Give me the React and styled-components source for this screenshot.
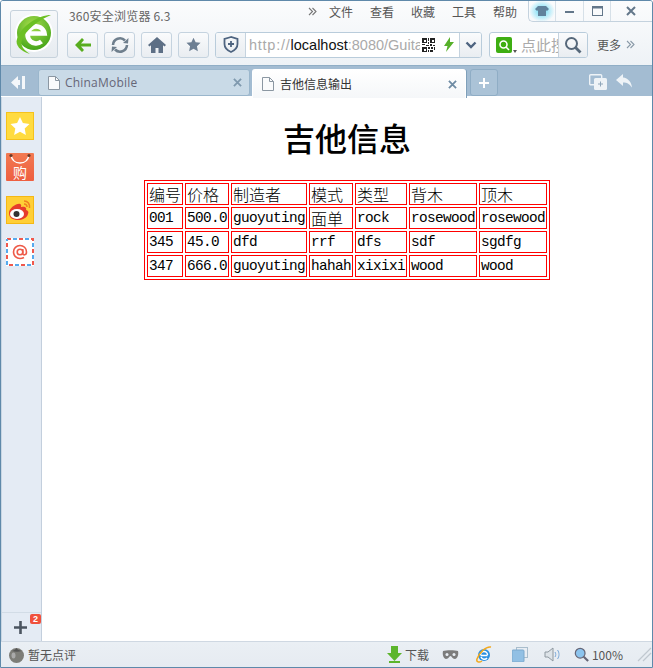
import React from "react";
import styled, { createGlobalStyle } from "styled-components";

const Global = createGlobalStyle`
  html, body { margin: 0; padding: 0; background: #fff; }
  * { box-sizing: border-box; }
`;
const UI = `"Noto Sans CJK SC", "Liberation Sans", sans-serif`;

const Win = styled.div`
  width: 653px; height: 668px; display: flex; flex-direction: column;
  border: 1px solid #5f89aa; border-radius: 3px 3px 0 0;
  font-family: ${UI}; overflow: hidden; background: #fff;
`;
const Toolbar = styled.div`
  height: 64px; flex: none; display: flex;
  padding: 0 0 0 9px;
  background: linear-gradient(#fbfcfd, #eef2f6);
`;
const LogoBox = styled.div`
  width: 48px; height: 48px; margin-top: 9px; flex: none;
  border: 1px solid #c6d2dc; border-radius: 3px;
  background: linear-gradient(#f6f8fa, #e6ebf0);
  display: flex; align-items: center; justify-content: center;
`;
const ToolCol = styled.div`
  flex: 1; min-width: 0; margin-left: 9px; display: flex; flex-direction: column;
`;
const TopRow = styled.div`
  height: 30px; display: flex; align-items: flex-start;
`;
const Title = styled.div`
  font-size: 12px; letter-spacing: 0.2px; color: #666; margin: 7px 0 0 2px; width: 239px; flex: none; line-height: 15px; white-space: nowrap;
`;
const Menu = styled.div`
  display: flex; align-items: center; height: 21px; font-size: 12px; color: #555; flex: 1; min-width: 0;
`;
const MenuItem = styled.span`
  width: 41px; line-height: 21px; flex: none;
`;
const Chev = styled.span`
  width: 21px; height: 21px; display: flex; align-items: center; flex: none;
`;
const WinBtns = styled.div`
  display: flex; height: 21px; flex: 1; border-left: 1px solid #c4d2de; border-bottom: 1px solid #c4d2de; border-radius: 0 0 0 5px; margin-left: -6px;
`;
const WinBtn = styled.div`
  width: ${p => p.$w}px; flex: none; display: flex; align-items: center; justify-content: center;
  border-right: ${p => p.$last ? "none" : "1px solid #d6e0e8"};
`;
const NavRow = styled.div`
  height: 27px; display: flex; align-items: center;
`;
const NavBtn = styled.div`
  width: 31px; height: 26px; flex: none; margin-right: 6px; border: 1px solid #c5d3df; border-radius: 3px;
  background: linear-gradient(#fafbfc, #e9edf1); display: flex; align-items: center; justify-content: center;
`;
const AddrBar = styled.div`
  width: 267px; height: 26px; flex: none; display: flex; border: 1px solid #b9ccdb; border-radius: 3px; overflow: hidden; background: #fff;
`;
const AddrShield = styled.div`
  width: 30px; flex: none; border-right: 1px solid #c5d3df; background: linear-gradient(#f6f8fa, #e9edf1);
  display: flex; align-items: center; justify-content: center;
`;
const AddrText = styled.div`
  width: 174px; flex: none; overflow: hidden; white-space: nowrap; font-family: "Liberation Sans", sans-serif;
  font-size: 14.5px; line-height: 24px; padding-left: 3px; color: #aaa;
`;
const AddrScheme = styled.span` letter-spacing: 0.75px; `;
const AddrHost = styled.span` color: #111; `;
const AddrIcons = styled.div`
  flex: 1; display: flex; align-items: center; gap: 9px; padding-left: 2px;
`;
const AddrDrop = styled.div`
  width: 22px; flex: none; border-left: 1px solid #c5d3df; background: linear-gradient(#fafbfc, #e9edf1);
  display: flex; align-items: center; justify-content: center;
`;
const SearchBar = styled.div`
  width: 99px; height: 26px; flex: none; margin-left: 7px; display: flex; border: 1px solid #b9ccdb; border-radius: 3px; overflow: hidden; background: #fff;
`;
const Engine = styled.div`
  width: 24px; flex: none; display: flex; align-items: center; padding-left: 6px; position: relative;
`;
const EngineCaret = styled.div`
  position: absolute; left: 23px; top: 17px; width: 0; height: 0; border: 2.5px solid transparent; border-top: 3px solid #555;
`;
const SearchText = styled.div`
  width: 37px; flex: none; margin-left: 7px; overflow: hidden; white-space: nowrap; font-size: 15px; line-height: 24px; color: #aaa;
`;
const SearchBtn = styled.div`
  flex: 1; border-left: 1px solid #c5d3df; background: linear-gradient(#fafbfc, #e9edf1);
  display: flex; align-items: center; justify-content: center;
`;
const More = styled.div`
  margin-left: 9px; font-size: 12px; color: #555; white-space: nowrap; display: flex; gap: 5px; align-items: center;
`;

const TabBar = styled.div`
  height: 31px; flex: none; display: flex; align-items: flex-start; background: #a3bcd2;
  border-top: 1px solid #90aec6; padding: 3px 0 0 9px; position: relative;
`;
const SideToggle = styled.div`
  width: 20px; height: 26px; margin-right: 8px; display: flex; align-items: center; flex: none;
`;
const Tab = styled.div`
  width: ${p => p.$active ? 214 : 212}px; height: ${p => p.$active ? 29 : 27}px; flex: none; margin-right: 2px; display: flex; align-items: center;
  padding: 0 ${p => p.$active ? 8 : 7}px 0 9px; font-size: 12px; color: ${p => p.$active ? "#333" : "#667"};
  background: ${p => p.$active ? "linear-gradient(#fff, #f5f7f9)" : "#c9dae7"};
  border: 1px solid ${p => p.$active ? "#fff" : "#9ab6cc"}; border-bottom: ${p => p.$active ? "none" : undefined};
  border-radius: 3px 3px ${p => p.$active ? "0 0" : "3px 3px"};
  ${p => p.$active ? "box-shadow: 1px 0 0 #7fa0ba;" : ""}
  z-index: ${p => p.$active ? 1 : 0};
`;
const TabLabel = styled.span`
  flex: 1; margin-left: ${p => p.$latin ? 5 : 6}px; line-height: 24px; white-space: nowrap;
  font-family: ${p => p.$latin ? `"Open Sans", "Liberation Sans", sans-serif` : UI}; letter-spacing: ${p => p.$latin ? "0.2px" : 0};
`;
const NewTab = styled.div`
  width: 28px; height: 27px; flex: none; margin-left: 2px; border: 1px solid #8fadc5; border-radius: 3px; background: #abc3d7;
  display: flex; align-items: center; justify-content: center;
`;
const TabRight = styled.div`
  margin-left: auto; display: flex; gap: 9px; padding: 5px 19px 0 0;
`;
const Body = styled.div`
  flex: 1; min-height: 0; display: flex;
`;
const Sidebar = styled.div`
  width: 41px; flex: none; background: #e4ebf4; border-left: 1px solid #c8d6e3; border-right: 1px solid #c3cfdd;
  display: flex; flex-direction: column; align-items: center; padding-top: 15px; margin-top: 1px;
`;
const SideIcon = styled.div`
  width: 28px; height: 28px; margin-bottom: ${p => p.$mb}px; flex: none; margin-right: 3px;
`;
const SideAdd = styled.div`
  margin-top: auto; width: 100%; height: 29px; border-top: 1px solid #d2dce6; position: relative;
  display: flex; align-items: center; justify-content: center; padding-right: 3px;
`;
const Badge = styled.div`
  position: absolute; right: 0; top: 1px; width: 11px; height: 10px; border-radius: 2px; background: #f0503c; color: #fff;
  font: bold 9px/10px "Liberation Sans", sans-serif; text-align: center;
`;
const Page = styled.main`
  flex: 1; min-width: 0; background: #fff; color: #000;
`;
const Heading = styled.h1`
  margin: 21px 0 0; text-align: center; font-size: 32px; line-height: 40px; font-weight: 500;
  font-family: "Noto Sans CJK SC", serif;
`;
const Table = styled.table`
  margin: 23px auto 0; border: 1px solid #f00; border-spacing: 2px; border-collapse: separate; table-layout: fixed; width: 406px;
`;
const Cell = styled.td`
  ${p => p.$w ? `width: ${p.$w}px;` : ""}
  border: 1px solid #f00; padding: 0 1px; height: 22px; overflow: hidden; white-space: nowrap;
  font-family: ${p => p.$cjk ? `"Noto Sans CJK SC", sans-serif` : `"Liberation Mono", monospace`};
  font-size: ${p => p.$cjk ? "16px" : "14.4px"};
  letter-spacing: ${p => p.$cjk ? 0 : "-0.64px"};
  line-height: 20px; color: #000; font-weight: ${p => p.$cjk ? 300 : 400};
`;
const Status = styled.div`
  height: 26px; flex: none; background: linear-gradient(#eaeff4, #e6ebf1); border-top: 1px solid #cfd8e2; display: flex; align-items: center;
  padding: 0 0 0 7px; font-size: 12px; color: #555; position: relative;
`;
const StatusText = styled.span` margin-left: 3px; white-space: nowrap; `;
const StatusRight = styled.div`
  margin-left: auto; display: flex; align-items: center;
`;
const StatusItem = styled.div`
  display: flex; align-items: center; gap: 3px; margin-right: ${p => p.$mr}px; white-space: nowrap;
`;

const Logo = () => (
  <svg width="46" height="46" viewBox="0 0 46 46" fill="none">
    <defs><radialGradient id="lg" cx="45%" cy="30%" r="75%"><stop offset="0" stopColor="#a9de4e" /><stop offset="1" stopColor="#3fa216" /></radialGradient></defs>
    <circle cx="23" cy="22" r="19" fill="#fff" />
    <circle cx="23" cy="22" r="17" fill="url(#lg)" />
    <path d="M18 22.500h15.500a8.500 8.500 0 1 0-3 8" stroke="#fff" strokeWidth="4.600" />
    <path d="M40 4C28 4 11 14 6 28c-2 6 3 12 13 15-6-4-10-8-8-14C14 20 27 9 40 4z" fill="#6cc024" />
  </svg>
);
const Back = () => <svg width="18" height="16" viewBox="0 0 18 16"><path d="M8 1 1 8l7 7 2-2-3-3.500h10v-3H7L10 3z" fill="#58ad1e" /></svg>;
const Refresh = () => (
  <svg width="20" height="18" viewBox="0 0 20 18" fill="none" stroke="#6f7f8d" strokeWidth="2.600">
    <path d="M3 9a7 7 0 0 1 12-4.500" /><path d="M17 9a7 7 0 0 1-12 4.500" />
    <path d="m18.500 2-.5 5.500-5-.5z" fill="#6f7f8d" stroke="none" /><path d="m1.500 16 .5-5.500 5 .5z" fill="#6f7f8d" stroke="none" />
  </svg>
);
const Home = () => <svg width="18" height="16" viewBox="0 0 18 16"><path d="M9 0 0 8l1.500 1.500L3 8.200V16h4.500v-5h3v5H15V8.200l1.500 1.300L18 8z" fill="#5d6f85" /></svg>;
const Star = () => <svg width="15" height="15" viewBox="0 0 24 24"><path d="m12 1 3.400 7.300 7.900 1-5.800 5.400 1.500 7.900-7-3.900-7 3.900 1.500-7.900L.7 9.300l7.900-1z" fill="#6d7f93" /></svg>;
const Shield = () => (
  <svg width="16" height="17" viewBox="0 0 16 17" fill="none">
    <path d="M8 1 1.500 3v5c0 4 3 6.500 6.500 8 3.500-1.500 6.500-4 6.500-8V3z" stroke="#4e6480" strokeWidth="1.800" />
    <path d="M8 5v6M5 8h6" stroke="#4e6480" strokeWidth="1.800" />
  </svg>
);
const QR = () => (
  <svg width="13" height="14" viewBox="0 0 13 14" shapeRendering="crispEdges">
    <path d="M0 0h5v5H0zM8 0h5v5H8zM0 9h5v5H0z" fill="#222" /><path d="M1.500 1.500h2v2h-2zM9.500 1.500h2v2h-2zM1.500 10.500h2v2h-2z" fill="#fff" />
    <path d="M6 0h1v3H6zM6 4h1v2H6zM0 6h3v1H0zM4 7h3v1H4zM8 6h2v2H8zM11 7h2v1h-2zM6 9h2v2H6zM9 9h2v2H9zM12 9h1v3h-1zM6 12h1v2H6zM8 12h3v2H8z" fill="#222" />
  </svg>
);
const Bolt = () => <svg width="10" height="15" viewBox="0 0 10 15"><path d="M6 0 0 9h3.500L2 15l8-10H6z" fill="#56b02a" /></svg>;
const Caret = () => <svg width="12" height="8" viewBox="0 0 12 8" fill="none"><path d="m1.500 1.500 4.500 4.500 4.500-4.500" stroke="#4e6480" strokeWidth="2.400" /></svg>;
const Mag = () => <svg width="18" height="18" viewBox="0 0 18 18" fill="none" stroke="#56687a"><circle cx="7.500" cy="7.500" r="5.500" strokeWidth="2" /><path d="m11.500 11.500 5 5" strokeWidth="2.800" /></svg>;
const EngineIcon = () => (
  <svg width="16" height="16" viewBox="0 0 16 16"><rect width="16" height="16" rx="2" fill="#3eae12" /><circle cx="7.500" cy="7.500" r="3.500" fill="none" stroke="#fff" strokeWidth="1.600" /><path d="m10 10 3 3" stroke="#fff" strokeWidth="1.600" /></svg>
);
const DoubleChev = ({ c }) => (
  <svg width="9" height="9" viewBox="0 0 9 9" fill="none" stroke={c} strokeWidth="1.100"><path d="m1 1 3.500 3.500L1 8M4.500 1 8 4.500 4.500 8" /></svg>
);
const Shirt = () => (
  <svg width="26" height="20" viewBox="0 0 26 20">
    <defs><radialGradient id="gl"><stop offset="0.3" stopColor="#8fe3f7" /><stop offset="1" stopColor="#8fe3f7" stopOpacity="0" /></radialGradient></defs>
    <ellipse cx="13" cy="10" rx="13" ry="11" fill="url(#gl)" />
    <path d="M9 5h8l3 3-2 2-1-.8V15H9V9.200L8 10 6 8z" fill="#60829c" />
  </svg>
);
const Min = () => <svg width="10" height="3"><rect width="9" height="2" y="1" fill="#63778a" /></svg>;
const Max = () => <svg width="11" height="10"><rect x=".5" y=".5" width="10" height="9" fill="none" stroke="#63778a" /><rect x="0" y="0" width="11" height="2.500" fill="#63778a" /></svg>;
const Close = ({ s = 10, c = "#63778a", w = 2 }) => <svg width={s} height={s} viewBox="0 0 10 10"><path d="m1 1 8 8M9 1l-8 8" stroke={c} strokeWidth={w} /></svg>;
const Doc = () => (
  <svg width="12" height="14" viewBox="0 0 12 14" fill="#fafbfc" stroke="#8b97a2"><path d="M.5.500h7l4 4v9H.5z" /><path d="M7.500.500v4h4" fill="none" /></svg>
);
const Plus = ({ s = 10, c = "#fff", w = 2 }) => <svg width={s} height={s} viewBox="0 0 10 10"><path d="M5 0v10M0 5h10" stroke={c} strokeWidth={w} /></svg>;
const Toggle = () => <svg width="16" height="15" viewBox="0 0 16 15"><path d="M8 1 1 7.500 8 14V10h2V5H8z" fill="#f4f7fa" /><rect x="12" y="1" width="3" height="13" fill="#f4f7fa" /></svg>;
const Restore = () => (
  <svg width="18" height="16" viewBox="0 0 18 16">
    <rect x=".7" y=".7" width="12" height="10" rx="1" fill="none" stroke="#eef3f7" strokeWidth="1.400" />
    <rect x="5" y="4" width="13" height="12" rx="1.500" fill="#eef3f7" /><path d="M11.500 7.500v5M9 10h5" stroke="#8fa6ba" />
  </svg>
);
const Undo = () => <svg width="17" height="14" viewBox="0 0 17 14"><path d="M7 0 0 6l7 6V8.500c4 0 6 1 9 5C15.500 8 12 4 7 3.500z" fill="#eef3f7" /></svg>;

const SStar = () => (
  <svg width="28" height="28" viewBox="0 0 28 28"><rect x=".5" y=".5" width="27" height="27" fill="#ffdb40" stroke="#f5c21c" /><path d="m14 5 2.900 6 6.600.900-4.800 4.500 1.200 6.600-5.900-3.200-5.900 3.200 1.200-6.600-4.800-4.500 6.600-.9z" fill="#fff" /></svg>
);
const SShop = () => (
  <svg width="28" height="28" viewBox="0 0 28 28">
    <defs><linearGradient id="sh" x1="0" y1="0" x2="0" y2="1"><stop offset="0" stopColor="#f27a52" /><stop offset="1" stopColor="#ee5f40" /></linearGradient></defs>
    <rect width="28" height="28" rx="1" fill="url(#sh)" />
    <path d="M5 2c1 6 4 8 9 8s8-2 9-8" fill="none" stroke="#fff" strokeWidth="1.500" />
    <circle cx="5" cy="2.500" r="1.600" fill="#6a3a28" /><circle cx="23" cy="2.500" r="1.600" fill="#6a3a28" />
    <text x="14" y="25" textAnchor="middle" fontSize="14" fill="#fff" fontFamily={`"Noto Sans CJK SC", sans-serif`}>购</text>
  </svg>
);
const SWeibo = () => (
  <svg width="28" height="28" viewBox="0 0 28 28"><rect x=".5" y=".5" width="27" height="27" fill="#ffcf36" stroke="#f5b814" /><path d="M3 17c0-5 8-10 11-9 2 .5 1 3 1 3s4-1 5 1c.5 1 0 2 0 2 2 .5 3 2 2 4-1 4-6 6-10 6-5 0-9-2-9-7z" fill="#e63c2c" /><ellipse cx="11" cy="18" rx="7" ry="5" fill="#fff" /><circle cx="10.500" cy="18" r="3" fill="#333" /><path d="M18 5c4 0 6 3 5.500 7M18 8c2 0 3 1.500 3 3" fill="none" stroke="#f08020" strokeWidth="1.500" /></svg>
);
const SMail = () => (
  <svg width="28" height="28" viewBox="0 0 28 28" fill="none">
    <rect width="28" height="28" fill="#fff" />
    <rect x="1" y="1" width="26" height="26" stroke="#f0584c" strokeWidth="2" strokeDasharray="4 8" />
    <rect x="1" y="1" width="26" height="26" stroke="#55aaee" strokeWidth="2" strokeDasharray="4 8" strokeDashoffset="6" />
    <circle cx="14" cy="14" r="2.800" stroke="#ee5a48" strokeWidth="1.600" />
    <path d="M16.800 11v4.500c0 2 3.700 2 3.700-1.500 0-4-3-6.500-6.500-6.500A6.500 6.500 0 0 0 14 20.500c2 0 3-.5 4-1" stroke="#ee5a48" strokeWidth="1.600" />
  </svg>
);
const Tomato = () => <svg width="17" height="17" viewBox="0 0 17 17"><circle cx="8.500" cy="9.500" r="7.500" fill="#7d7d78" /><path d="M4 5c2-1 3-1 4.500-3 1 2 3 2 5 3-3 1-6 1-9.500 0z" fill="#555" /><ellipse cx="5.500" cy="9.500" rx="2" ry="3" fill="#aaa" /></svg>;
const Down = () => <svg width="15" height="17" viewBox="0 0 15 17"><path d="M4 0h7v7h4l-7.500 8L0 7h4z" fill="#5cb52c" /><rect x="2" y="15" width="11" height="2" fill="#5cb52c" /></svg>;
const Mask = () => <svg width="17" height="10" viewBox="0 0 17 10"><path d="M1 1c3-1 12-1 15 0 1 4-1 8-3 8-3 0-3-3-4.500-3S7 9 4 9C2 9 0 5 1 1z" fill="#7c7c7c" /><circle cx="5" cy="4.500" r="1.500" fill="#e8edf3" /><circle cx="12" cy="4.500" r="1.500" fill="#e8edf3" /></svg>;
const IE = () => (
  <svg width="16" height="17" viewBox="0 0 16 17" fill="none"><ellipse cx="8" cy="9" rx="6" ry="6" fill="#2a8fe0" /><path d="M4.500 9.500h7M4.500 9a3.500 3.500 0 0 1 7 0M11 12a3.500 3.500 0 0 1-6-1" stroke="#fff" strokeWidth="1.500" /><path d="M15 1C10 0 3 7 1 13c-1 3 2 4 5 2" stroke="#f2a81d" strokeWidth="1.500" /></svg>
);
const Windows = () => <svg width="16" height="15" viewBox="0 0 16 15"><rect x="4.500" y=".5" width="11" height="10" fill="#e8edf3" stroke="#a9bdcc" /><rect x="0" y="3" width="12" height="12" rx="1" fill="#92c0e4" stroke="#7aa8cc" /></svg>;
const Speaker = () => <svg width="17" height="15" viewBox="0 0 17 15" fill="none"><path d="M1 5h3l5-4v13l-5-4H1z" fill="#dde3e8" stroke="#8e98a0" /><path d="M11 5c1 1.500 1 3.500 0 5M13.500 3c2 2.500 2 6.500 0 9" stroke="#7aa8d8" /></svg>;
const ZoomIcon = () => <svg width="15" height="15" viewBox="0 0 17 17"><circle cx="7" cy="7" r="5.500" fill="#8cc4ee" stroke="#667" strokeWidth="1.400" /><path d="m11 11 5 5" stroke="#667" strokeWidth="2.400" /></svg>;
const Grip = () => <svg width="15" height="15" viewBox="0 0 15 15"><path d="M1 14 14 1M6 14l8-8" stroke="#c0c8d0" strokeWidth="1.200" /></svg>;

const header = [
  { t: "编号", w: 36 }, { t: "价格", w: 44 }, { t: "制造者", w: 76 }, { t: "模式", w: 44 },
  { t: "类型", w: 52 }, { t: "背木", w: 68 }, { t: "顶木", w: 68 },
];
const rows = [
  ["001", "500.0", "guoyuting", "面单", "rock", "rosewood", "rosewood"],
  ["345", "45.0", "dfd", "rrf", "dfs", "sdf", "sgdfg"],
  ["347", "666.0", "guoyuting", "hahah", "xixixi", "wood", "wood"],
];

export default function App() {
  return (
    <>
      <Global />
      <Win>
        <Toolbar>
          <LogoBox><Logo /></LogoBox>
          <ToolCol>
            <TopRow>
              <Title>360安全浏览器 6.3</Title>
              <Menu>
                <Chev><DoubleChev c="#777" /></Chev>
                {["文件", "查看", "收藏", "工具", "帮助"].map(m => <MenuItem key={m}>{m}</MenuItem>)}
                <WinBtns>
                  <WinBtn $w={27}><Shirt /></WinBtn>
                  <WinBtn $w={28}><Min /></WinBtn>
                  <WinBtn $w={27}><Max /></WinBtn>
                  <WinBtn $w={40} $last><Close /></WinBtn>
                </WinBtns>
              </Menu>
            </TopRow>
            <NavRow>
              <NavBtn><Back /></NavBtn>
              <NavBtn><Refresh /></NavBtn>
              <NavBtn><Home /></NavBtn>
              <NavBtn><Star /></NavBtn>
              <AddrBar>
                <AddrShield><Shield /></AddrShield>
                <AddrText><AddrScheme>http://</AddrScheme><AddrHost>localhost</AddrHost>:8080/Guitar</AddrText>
                <AddrIcons><QR /><Bolt /></AddrIcons>
                <AddrDrop><Caret /></AddrDrop>
              </AddrBar>
              <SearchBar>
                <Engine><EngineIcon /><EngineCaret /></Engine>
                <SearchText>点此搜索</SearchText>
                <SearchBtn><Mag /></SearchBtn>
              </SearchBar>
              <More>更多<DoubleChev c="#8a9aa8" /></More>
            </NavRow>
          </ToolCol>
        </Toolbar>
        <TabBar>
          <SideToggle><Toggle /></SideToggle>
          <Tab>
            <Doc /><TabLabel $latin>ChinaMobile</TabLabel><Close s={9} c="#7f99ae" />
          </Tab>
          <Tab $active>
            <Doc /><TabLabel>吉他信息输出</TabLabel><Close s={9} c="#6f8ca4" />
          </Tab>
          <NewTab><Plus /></NewTab>
          <TabRight><Restore /><Undo /></TabRight>
        </TabBar>
        <Body>
          <Sidebar>
            <SideIcon $mb={13}><SStar /></SideIcon>
            <SideIcon $mb={15}><SShop /></SideIcon>
            <SideIcon $mb={14}><SWeibo /></SideIcon>
            <SideIcon $mb={0}><SMail /></SideIcon>
            <SideAdd><Plus s={13} c="#4b5560" w={2} /><Badge>2</Badge></SideAdd>
          </Sidebar>
          <Page>
            <Heading>吉他信息</Heading>
            <Table>
              <tbody>
                <tr>{header.map(h => <Cell key={h.t} $cjk $w={h.w}>{h.t}</Cell>)}</tr>
                {rows.map(r => (
                  <tr key={r[0]}>
                    {r.map((c, i) => <Cell key={i} $cjk={c === "面单"}>{c}</Cell>)}
                  </tr>
                ))}
              </tbody>
            </Table>
          </Page>
        </Body>
        <Status>
          <Tomato /><StatusText>暂无点评</StatusText>
          <StatusRight>
            <StatusItem $mr={13}><Down />下载</StatusItem>
            <StatusItem $mr={17}><Mask /></StatusItem>
            <StatusItem $mr={20}><IE /></StatusItem>
            <StatusItem $mr={16}><Windows /></StatusItem>
            <StatusItem $mr={13}><Speaker /></StatusItem>
            <StatusItem $mr={14}><ZoomIcon />100%</StatusItem>
            <Grip />
          </StatusRight>
        </Status>
      </Win>
    </>
  );
}
